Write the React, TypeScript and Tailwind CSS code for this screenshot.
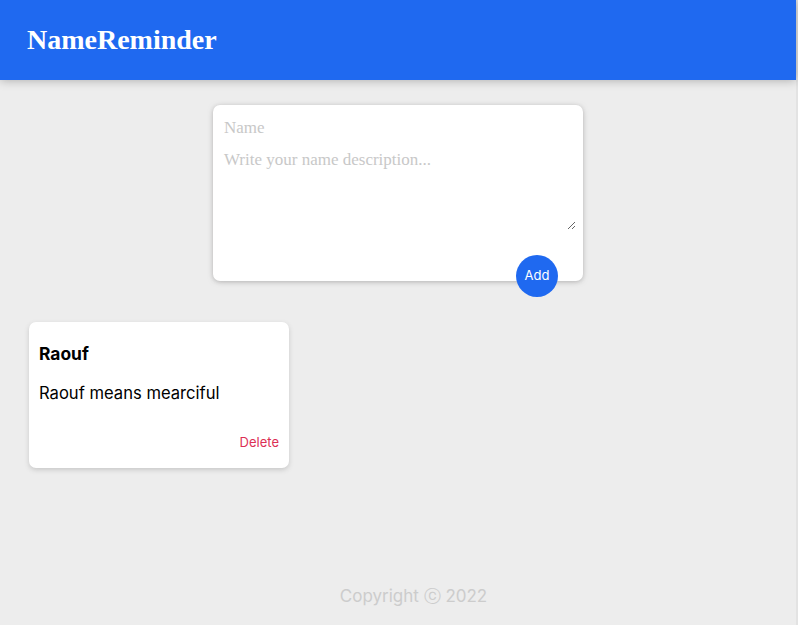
import React from "react";

export default function App() {
  return (
    <div className="min-h-[625px] w-full flex bg-[#ededed]">
      <div className="flex-1 flex flex-col min-h-[625px] relative">
        <header className="h-[80px] bg-[#1f69f0] flex items-center px-[27px] shadow-[0_0_10px_0_rgba(0,0,0,0.3)] relative z-10">
          <h1 className="text-white text-[28px] font-bold leading-none font-['Liberation_Serif',serif]">
            NameReminder
          </h1>
        </header>

        <main className="flex-1 flex flex-col">
          <form
            className="relative w-[370px] mx-auto mt-[25px] bg-white rounded-[7px] shadow-[0_1px_5px_rgba(138,137,137,0.6)] px-[7px] pt-[9px] pb-[51px]"
            onSubmit={(e) => e.preventDefault()}
          >
            <input
              placeholder="Name"
              className="block w-full border-none outline-none px-[4px] py-[4px] text-[17px] leading-[20px] font-['Liberation_Serif',serif] placeholder:text-[#c8c8c8]"
            />
            <textarea
              placeholder="Write your name description..."
              rows={3}
              className="block w-full h-[82px] mt-[6px] border-none outline-none px-[4px] py-[2px] text-[17px] leading-[20px] font-['Liberation_Serif',serif] placeholder:text-[#c8c8c8]"
            />
            <button
              type="submit"
              className="absolute right-[25px] bottom-[-16px] w-[42px] h-[42px] rounded-full bg-[#1f69f0] text-white text-[13px] font-['Inter',sans-serif] flex items-center justify-center"
            >
              Add
            </button>
          </form>

          <div className="flex flex-wrap px-[29px] mt-[41px]">
            <div className="w-[260px] h-[146px] bg-white rounded-[7px] shadow-[0_2px_5px_#c8c8c8] px-[10px] pt-[20px] flex flex-col font-['Inter',sans-serif]">
              <h2 className="text-[17.4px] font-bold leading-[24px] text-black">Raouf</h2>
              <p className="text-[16.6px] leading-[24px] text-black mt-[15px]">Raouf means mearciful</p>
              <div className="flex justify-end mt-[28px]">
                <button className="text-[13px] text-[#dc2f55] leading-[18px]">Delete</button>
              </div>
            </div>
          </div>
        </main>

        <footer className="flex justify-center pb-[15px] pl-[31px]">
          <p className="text-[17px] leading-[27px] text-[#cccccc] font-['Inter',sans-serif]">
            Copyright ⓒ 2022
          </p>
        </footer>
      </div>
      <div className="w-[2px] bg-[#e3e3e3]" />
    </div>
  );
}
